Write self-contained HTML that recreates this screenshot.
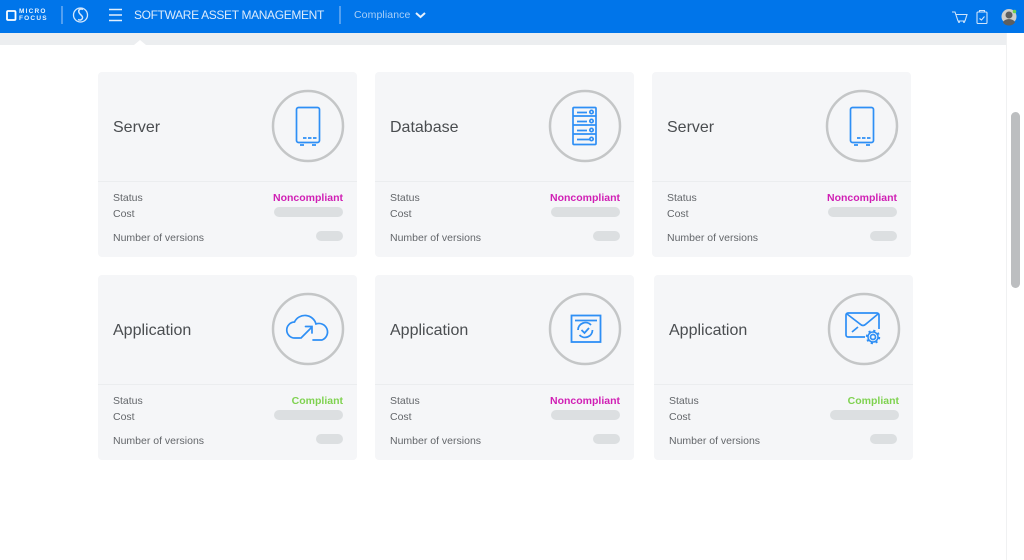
<!DOCTYPE html>
<html><head><meta charset="utf-8"><style>
html,body{margin:0;padding:0;width:1024px;height:560px;overflow:hidden;background:#fff;font-family:"Liberation Sans",sans-serif}
.abs,.card,.card *{position:absolute}
.abs{position:absolute}
.card{width:259px;height:185px;background:#f5f6f8;border-radius:4px}
.card .div{left:0;right:0;top:109px;height:1px;background:#ebedef}
.t{left:15px;top:46px;font-size:16px;color:#4a4d50;line-height:20px;white-space:nowrap}
.l{left:15px;font-size:10.5px;color:#63666a;line-height:14px;white-space:nowrap}
.st{right:14px;top:119px;font-size:10.5px;font-weight:bold;line-height:14px;white-space:nowrap}
.n{color:#d01fb4}.c{color:#7fd250}
.b1{left:176px;top:135px;width:69px;height:10px;border-radius:5px;background:#dcdfe1}
.b2{left:218px;top:159px;width:27px;height:10px;border-radius:5px;background:#dcdfe1}
.card svg{left:172px;top:16px;overflow:visible}
.card svg g{stroke:#2e8ff5}
</style></head><body>
<div class="abs" style="left:0;top:0;width:1024px;height:33px;background:#0075ea"></div>
<div class="abs" style="left:0;top:33px;width:1007px;height:12px;background:#eceef0"></div>
<div class="abs" style="left:1006px;top:33px;width:1px;height:527px;background:#f0f1f2"></div>
<div class="abs" style="left:1011px;top:112px;width:9px;height:176px;border-radius:5px;background:#bcbec0"></div>
<svg class="abs" style="left:0;top:0" width="1024" height="46" viewBox="0 0 1024 46" fill="none">
<path d="M134 45l6-5 6 5z" fill="#fff"/>
<rect x="7" y="11" width="8.500" height="9" rx="1" stroke="#fff" stroke-width="1.800"/>
<path d="M62 6v18M340 6v18" stroke="#7fb6f4" stroke-width="1.300"/>
<circle cx="80.500" cy="15" r="7" stroke="#d5e8fc" stroke-width="1.300"/>
<path d="M83 9.500c-3-1.500-5 .5-4 3 1 2.500 4 3 3.500 5.500-.5 2-2.500 2.500-4.500 1.500" stroke="#d5e8fc" stroke-width="1.500"/>
<path d="M109 9.500h13M109 15h13M109 20.500h13" stroke="#e2effd" stroke-width="1.500"/>
<path d="M416 13l4.500 4 4.500-4" stroke="#e6f1fd" stroke-width="2"/>
<path d="M952 12h3l3 9h7l2-6.500h-11" stroke="#cfe4fb" stroke-width="1.100"/>
<circle cx="959" cy="22" r="1" fill="#cfe4fb"/><circle cx="964" cy="22" r="1" fill="#cfe4fb"/>
<rect x="977" y="12" width="10" height="11.500" rx="1" stroke="#cfe4fb" stroke-width="1.100"/>
<path d="M979.500 12v-1.500h5V12M979.500 18.500l2 1.500 3-3.500" stroke="#cfe4fb" stroke-width="1.100"/>
<circle cx="1009" cy="16.500" r="7.500" fill="#cfcfcc"/>
<circle cx="1009" cy="15" r="3.500" fill="#5d5f5f"/>
<path d="M1003 22.500c1-4.500 11-4.500 12 0a7.500 7.500 0 0 1-12 0z" fill="#5d5f5f"/>
<circle cx="1014.500" cy="11.500" r="1.800" fill="#6fd04f"/>
</svg>
<div class="abs" style="left:19px;top:9px;font-size:6.500px;font-weight:bold;color:#e6f1fd;line-height:6.500px;letter-spacing:1.200px">MICRO<br>FOCUS</div>
<div class="abs" style="left:134px;top:8px;font-size:12px;letter-spacing:-.35px;color:#dcebfc;line-height:15px;white-space:nowrap">SOFTWARE ASSET MANAGEMENT</div>
<div class="abs" style="left:354px;top:9px;font-size:10.500px;color:#a9cff8;line-height:13px;white-space:nowrap;letter-spacing:.1px">Compliance</div>

<div class="card" style="left:98px;top:72px"><div class="t">Server</div>
<svg width="76" height="76" viewBox="0 0 76 76" fill="none"><circle cx="38" cy="38" r="35" stroke="#c4c6c7" stroke-width="2.500"/><g stroke-width="1.700"><rect x="26.500" y="19.500" width="23" height="35" rx="2"/><path d="M33 50h3.500M38 50h3.500M43 50h3.500M30 57h4M42 57h4"/></g></svg>
<div class="div"></div><div class="l" style="top:119px">Status</div><div class="st n">Noncompliant</div><div class="l" style="top:135px">Cost</div><div class="b1"></div><div class="l" style="top:159px">Number of versions</div><div class="b2"></div></div>

<div class="card" style="left:375px;top:72px"><div class="t">Database</div>
<svg width="76" height="76" viewBox="0 0 76 76" fill="none"><circle cx="38" cy="38" r="35" stroke="#c4c6c7" stroke-width="2.500"/><g stroke-width="1.700"><rect x="26" y="19.500" width="23" height="37" rx="1"/><path d="M26 28h23M26 37h23M26 46h23M30 24.500h10M30 33.500h10M30 42.500h10M30 51.500h13"/><circle cx="44.500" cy="24" r="1.700"/><circle cx="44.500" cy="33" r="1.700"/><circle cx="44.500" cy="42" r="1.700"/><circle cx="44.500" cy="51" r="1.700"/></g></svg>
<div class="div"></div><div class="l" style="top:119px">Status</div><div class="st n">Noncompliant</div><div class="l" style="top:135px">Cost</div><div class="b1"></div><div class="l" style="top:159px">Number of versions</div><div class="b2"></div></div>

<div class="card" style="left:652px;top:72px"><div class="t">Server</div>
<svg width="76" height="76" viewBox="0 0 76 76" fill="none"><circle cx="38" cy="38" r="35" stroke="#c4c6c7" stroke-width="2.500"/><g stroke-width="1.700"><rect x="26.500" y="19.500" width="23" height="35" rx="2"/><path d="M33 50h3.500M38 50h3.500M43 50h3.500M30 57h4M42 57h4"/></g></svg>
<div class="div"></div><div class="l" style="top:119px">Status</div><div class="st n">Noncompliant</div><div class="l" style="top:135px">Cost</div><div class="b1"></div><div class="l" style="top:159px">Number of versions</div><div class="b2"></div></div>

<div class="card" style="left:98px;top:275px"><div class="t">Application</div>
<svg width="76" height="76" viewBox="0 0 76 76" fill="none"><circle cx="38" cy="38" r="35" stroke="#c4c6c7" stroke-width="2.500"/><g stroke-width="1.700" stroke-linecap="round"><path d="M30 47H25A8 8 0 0 1 24.500 31A11.500 11.500 0 0 1 46 33A8.500 8.500 0 0 1 52 49H43M31 47l11-11M35.500 35.500h6.500v6.500"/></g></svg>
<div class="div"></div><div class="l" style="top:119px">Status</div><div class="st c">Compliant</div><div class="l" style="top:135px">Cost</div><div class="b1"></div><div class="l" style="top:159px">Number of versions</div><div class="b2"></div></div>

<div class="card" style="left:375px;top:275px"><div class="t">Application</div>
<svg width="76" height="76" viewBox="0 0 76 76" fill="none"><circle cx="38" cy="38" r="35" stroke="#c4c6c7" stroke-width="2.500"/><g stroke-width="1.800"><rect x="24.500" y="24.500" width="29" height="26.500"/><path d="M28 29.500h22M31 39a7.500 7.500 0 0 1 13-5M45.500 39a7.500 7.500 0 0 1-13 5M34.500 39l3 3 4.500-5"/></g></svg>
<div class="div"></div><div class="l" style="top:119px">Status</div><div class="st n">Noncompliant</div><div class="l" style="top:135px">Cost</div><div class="b1"></div><div class="l" style="top:159px">Number of versions</div><div class="b2"></div></div>

<div class="card" style="left:654px;top:275px"><div class="t">Application</div>
<svg width="76" height="76" viewBox="0 0 76 76" fill="none"><circle cx="38" cy="38" r="35" stroke="#c4c6c7" stroke-width="2.500"/><g stroke-width="1.700"><path d="M39 46H22a2 2 0 0 1-2-2V24a2 2 0 0 1 2-2h29a2 2 0 0 1 2 2v14"/><path d="M21 23l13 10c2 2 4 2 6 0l12-10M26 41l6-5"/><circle cx="47" cy="46" r="2.500"/><circle cx="47" cy="46" r="5" stroke-width="1.500"/><circle cx="47" cy="46" r="6.300" stroke-width="1.800" stroke-dasharray="2.200 2.750"/></g></svg>
<div class="div"></div><div class="l" style="top:119px">Status</div><div class="st c">Compliant</div><div class="l" style="top:135px">Cost</div><div class="b1"></div><div class="l" style="top:159px">Number of versions</div><div class="b2" style="left:216px"></div></div>
</body></html>
